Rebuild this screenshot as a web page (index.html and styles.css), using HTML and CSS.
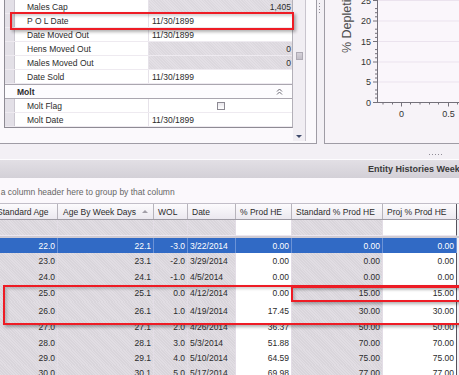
FILE: index.html
```html
<!DOCTYPE html>
<html lang="en">
<head>
    <meta charset="UTF-8">
    <meta name="viewport" content="width=device-width, initial-scale=1.0">
    <title>Entity Histories</title>
    <link rel="stylesheet" href="styles.css">
</head>
<body>
    <div class="screen">
        <div class="top">
            <div class="props-panel">
                <div class="prop-grid">
                    <div class="prop-rows">
                        <div class="prop-row">
                            <div class="prop-margin"></div>
                            <div class="prop-label">Males Cap</div>
                            <div class="prop-value readonly">1,405</div>
                        </div>
                        <div class="prop-row">
                            <div class="prop-margin"></div>
                            <div class="prop-label">P O L Date</div>
                            <div class="prop-value">11/30/1899</div>
                        </div>
                        <div class="prop-row">
                            <div class="prop-margin"></div>
                            <div class="prop-label">Date Moved Out</div>
                            <div class="prop-value">11/30/1899</div>
                        </div>
                        <div class="prop-row">
                            <div class="prop-margin"></div>
                            <div class="prop-label">Hens Moved Out</div>
                            <div class="prop-value readonly">0</div>
                        </div>
                        <div class="prop-row">
                            <div class="prop-margin"></div>
                            <div class="prop-label">Males Moved Out</div>
                            <div class="prop-value readonly">0</div>
                        </div>
                        <div class="prop-row">
                            <div class="prop-margin"></div>
                            <div class="prop-label">Date Sold</div>
                            <div class="prop-value">11/30/1899</div>
                        </div>
                        <div class="prop-category">
                            <span>Molt</span>
                            <svg class="collapse-icon" width="7" height="7" viewBox="0 0 7 7">
                                <polyline points="1,3.5 3.5,1 6,3.5" fill="none" stroke="#6d6a74" stroke-width="1"/>
                                <polyline points="1,6.5 3.5,4 6,6.5" fill="none" stroke="#6d6a74" stroke-width="1"/>
                            </svg>
                        </div>
                        <div class="prop-row">
                            <div class="prop-margin"></div>
                            <div class="prop-label">Molt Flag</div>
                            <div class="prop-value check-cell"><span class="checkbox"></span></div>
                        </div>
                        <div class="prop-row">
                            <div class="prop-margin"></div>
                            <div class="prop-label">Molt Date</div>
                            <div class="prop-value">11/30/1899</div>
                        </div>
                    </div>
                    <div class="vscroll">
                        <span class="vscroll-grip"></span>
                        <span class="vscroll-arrow"></span>
                    </div>
                </div>
            </div>
            <div class="vsplit"><span class="grip-v"></span></div>
            <div class="chart-panel">
                <svg width="134" height="143" viewBox="0 0 134 143">
                    <g transform="translate(-325,0)">
                        <rect x="377" y="-5" width="90" height="107" fill="#faf6fb"/>
                        <g stroke="#ebe3ee" stroke-width="1">
                            <line x1="377" y1="0.5" x2="460" y2="0.5"/>
                            <line x1="377" y1="21" x2="460" y2="21"/>
                            <line x1="377" y1="41.5" x2="460" y2="41.5"/>
                            <line x1="377" y1="62" x2="460" y2="62"/>
                            <line x1="377" y1="82" x2="460" y2="82"/>
                        </g>
                        <g stroke="#74717a" stroke-width="1">
                            <line x1="377.5" y1="0" x2="377.5" y2="102.5"/>
                            <line x1="377" y1="102.5" x2="460" y2="102.5"/>
                            <line x1="373" y1="0.5" x2="377" y2="0.5"/>
                            <line x1="373" y1="21" x2="377" y2="21"/>
                            <line x1="373" y1="41.5" x2="377" y2="41.5"/>
                            <line x1="373" y1="62" x2="377" y2="62"/>
                            <line x1="373" y1="82" x2="377" y2="82"/>
                            <line x1="373" y1="102.5" x2="377" y2="102.5"/>
                            <line x1="375" y1="8.6" x2="377" y2="8.6"/>
                            <line x1="375" y1="12.7" x2="377" y2="12.7"/>
                            <line x1="375" y1="16.8" x2="377" y2="16.8"/>
                            <line x1="375" y1="29.2" x2="377" y2="29.2"/>
                            <line x1="375" y1="33.3" x2="377" y2="33.3"/>
                            <line x1="375" y1="37.4" x2="377" y2="37.4"/>
                            <line x1="375" y1="49.6" x2="377" y2="49.6"/>
                            <line x1="375" y1="53.7" x2="377" y2="53.7"/>
                            <line x1="375" y1="57.8" x2="377" y2="57.8"/>
                            <line x1="375" y1="70" x2="377" y2="70"/>
                            <line x1="375" y1="74" x2="377" y2="74"/>
                            <line x1="375" y1="78" x2="377" y2="78"/>
                            <line x1="375" y1="90" x2="377" y2="90"/>
                            <line x1="375" y1="94" x2="377" y2="94"/>
                            <line x1="375" y1="98" x2="377" y2="98"/>
                            <line x1="383" y1="102" x2="383" y2="104.5"/>
                            <line x1="392.5" y1="102" x2="392.5" y2="104.5"/>
                            <line x1="401.5" y1="102" x2="401.5" y2="106.5"/>
                            <line x1="410.5" y1="102" x2="410.5" y2="104.5"/>
                            <line x1="420" y1="102" x2="420" y2="104.5"/>
                            <line x1="429.5" y1="102" x2="429.5" y2="104.5"/>
                            <line x1="438.5" y1="102" x2="438.5" y2="104.5"/>
                            <line x1="448.5" y1="102" x2="448.5" y2="106.5"/>
                            <line x1="457.5" y1="102" x2="457.5" y2="104.5"/>
                        </g>
                        <g class="tick-label" text-anchor="end">
                            <text x="371" y="3.5">25</text>
                            <text x="371" y="24">20</text>
                            <text x="371" y="44.5">15</text>
                            <text x="371" y="65">10</text>
                            <text x="371" y="85">5</text>
                            <text x="371" y="105.5">0</text>
                        </g>
                        <g class="tick-label" text-anchor="middle">
                            <text x="401.5" y="117">0</text>
                            <text x="448.5" y="117">0.5</text>
                        </g>
                        <text class="axis-title" transform="translate(351,53) rotate(-90)">% Depletion</text>
                    </g>
                </svg>
            </div>
        </div>

        <div class="hsplit"><span class="grip-h"></span></div>

        <div class="grid-panel">
            <div class="grid-title">Entity Histories Weekly</div>
            <div class="group-panel">Drag a column header here to group by that column</div>
            <div class="grid">
                <div class="grid-row header">
                    <div class="hcell">Standard Age</div>
                    <div class="hcell sorted">Age By Week Days<span class="sort-up"></span></div>
                    <div class="hcell">WOL</div>
                    <div class="hcell">Date</div>
                    <div class="hcell">% Prod HE</div>
                    <div class="hcell">Standard % Prod HE</div>
                    <div class="hcell last">Proj % Prod HE</div>
                </div>
                <div class="grid-row filter">
                    <div class="cell ro"></div>
                    <div class="cell ro"></div>
                    <div class="cell ro"></div>
                    <div class="cell ro"></div>
                    <div class="cell"></div>
                    <div class="cell ro"></div>
                    <div class="cell last"></div>
                </div>
                <div class="grid-row selected">
                    <div class="cell ro num">22.0</div>
                    <div class="cell ro num">22.1</div>
                    <div class="cell ro num">-3.0</div>
                    <div class="cell ro">3/22/2014</div>
                    <div class="cell num">0.00</div>
                    <div class="cell ro num">0.00</div>
                    <div class="cell num last">0.00</div>
                </div>
                <div class="grid-row">
                    <div class="cell ro num">23.0</div>
                    <div class="cell ro num">23.1</div>
                    <div class="cell ro num">-2.0</div>
                    <div class="cell ro">3/29/2014</div>
                    <div class="cell num">0.00</div>
                    <div class="cell ro num">0.00</div>
                    <div class="cell num last">0.00</div>
                </div>
                <div class="grid-row">
                    <div class="cell ro num">24.0</div>
                    <div class="cell ro num">24.1</div>
                    <div class="cell ro num">-1.0</div>
                    <div class="cell ro">4/5/2014</div>
                    <div class="cell num">0.00</div>
                    <div class="cell ro num">0.00</div>
                    <div class="cell num last">0.00</div>
                </div>
                <div class="grid-row tall">
                    <div class="cell ro num">25.0</div>
                    <div class="cell ro num">25.1</div>
                    <div class="cell ro num">0.0</div>
                    <div class="cell ro">4/12/2014</div>
                    <div class="cell num">0.00</div>
                    <div class="cell ro num">15.00</div>
                    <div class="cell num last">15.00</div>
                </div>
                <div class="grid-row tall">
                    <div class="cell ro num">26.0</div>
                    <div class="cell ro num">26.1</div>
                    <div class="cell ro num">1.0</div>
                    <div class="cell ro">4/19/2014</div>
                    <div class="cell num">17.45</div>
                    <div class="cell ro num">30.00</div>
                    <div class="cell num last">30.00</div>
                </div>
                <div class="grid-row">
                    <div class="cell ro num">27.0</div>
                    <div class="cell ro num">27.1</div>
                    <div class="cell ro num">2.0</div>
                    <div class="cell ro">4/26/2014</div>
                    <div class="cell num">36.37</div>
                    <div class="cell ro num">50.00</div>
                    <div class="cell num last">50.00</div>
                </div>
                <div class="grid-row">
                    <div class="cell ro num">28.0</div>
                    <div class="cell ro num">28.1</div>
                    <div class="cell ro num">3.0</div>
                    <div class="cell ro">5/3/2014</div>
                    <div class="cell num">51.88</div>
                    <div class="cell ro num">70.00</div>
                    <div class="cell num last">70.00</div>
                </div>
                <div class="grid-row">
                    <div class="cell ro num">29.0</div>
                    <div class="cell ro num">29.1</div>
                    <div class="cell ro num">4.0</div>
                    <div class="cell ro">5/10/2014</div>
                    <div class="cell num">64.59</div>
                    <div class="cell ro num">75.00</div>
                    <div class="cell num last">75.00</div>
                </div>
                <div class="grid-row">
                    <div class="cell ro num">30.0</div>
                    <div class="cell ro num">30.1</div>
                    <div class="cell ro num">5.0</div>
                    <div class="cell ro">5/17/2014</div>
                    <div class="cell num">69.98</div>
                    <div class="cell ro num">77.00</div>
                    <div class="cell num last">77.00</div>
                </div>
            </div>
        </div>

        <!-- annotation boxes drawn over the screenshot -->
        <div class="mark mark-pol"></div>
        <div class="mark mark-rows"></div>
        <div class="mark mark-std"></div>
    </div>
</body>
</html>
```

FILE: styles.css
```css
* {
    margin: 0;
    padding: 0;
    box-sizing: border-box;
}

body {
    width: 459px;
    height: 375px;
    overflow: hidden;
    background: #f3f0f5;
    font-family: 'Liberation Sans', Arial, sans-serif;
    font-size: 8.5px;
    color: #2b2b2b;
}

.screen {
    position: relative;
    width: 459px;
    height: 375px;
    overflow: hidden;
}

/* top area: property grid + chart */

.top {
    display: flex;
    height: 144px;
}

.props-panel {
    width: 317px;
    padding-left: 4px;
    background: #fbf9fc;
    border-right: 1px solid #9f9ca5;
    border-bottom: 1px solid #9f9ca5;
}

.prop-grid {
    display: flex;
    width: 302px;
    height: 141px;
}

.prop-rows {
    width: 289px;
    height: 128px;
    background: #fff;
    border-left: 1px solid #8e8b94;
    border-right: 1px solid #b3b0b8;
    border-bottom: 1px solid #8e8b94;
}

.prop-row {
    display: flex;
    height: 14px;
    line-height: 13px;
    border-bottom: 1px solid #eeeaf0;
}

.prop-margin {
    width: 10px;
    background: #e3e0e7;
    border-right: 1px solid #cbc7d0;
}

.prop-label {
    width: 134px;
    padding-left: 12px;
    padding-top: 1px;
    border-right: 1px solid #e6e2e9;
    white-space: nowrap;
}

.prop-value {
    flex: 1;
    padding-left: 3px;
    padding-top: 1px;
}

.prop-value.readonly {
    text-align: right;
    padding-right: 1px;
    background: repeating-linear-gradient(45deg, #dcd8de 0 1px, #e3dfe5 1px 2px);
}

.check-cell {
    display: flex;
    align-items: center;
    padding-left: 68px;
}

.checkbox {
    width: 8px;
    height: 8px;
    border: 1px solid #8d8a93;
    background: linear-gradient(#e9e7ec, #ffffff);
}

.prop-category {
    display: flex;
    justify-content: space-between;
    align-items: center;
    height: 15px;
    padding-left: 12px;
    padding-right: 9px;
    font-weight: bold;
    border-top: 1px solid #aaa6af;
    border-bottom: 1px solid #aaa6af;
    background: #fdfcfe;
}

.vscroll {
    display: flex;
    flex-direction: column;
    align-items: center;
    justify-content: space-between;
    width: 13px;
    height: 141px;
    padding: 52px 0 3px;
    background: #f1eef3;
    border-right: 1px solid #c9c5ce;
}

.vscroll-grip {
    width: 7px;
    height: 8px;
    background: linear-gradient(#d5d1d9, #c2bec7);
    border: 1px solid #aeaab4;
}

.vscroll-arrow {
    width: 0;
    height: 0;
    border-left: 3px solid transparent;
    border-right: 3px solid transparent;
    border-top: 3px solid #3f4a6b;
}

.vsplit {
    width: 7px;
    padding: 3px 0 0 2px;
}

.grip-v {
    display: block;
    width: 1px;
    height: 12px;
    background: repeating-linear-gradient(#8f8c96 0 1px, transparent 1px 3px);
}

.chart-panel {
    flex: 1;
    background: #f7f3f8;
    border-left: 1px solid #9f9ca5;
    border-bottom: 1px solid #9f9ca5;
    overflow: hidden;
}

.chart-panel svg {
    display: block;
}

.tick-label {
    font-family: 'Liberation Sans', Arial, sans-serif;
    font-size: 9px;
    fill: #333;
}

.axis-title {
    font-family: 'Liberation Sans', Arial, sans-serif;
    font-size: 12.5px;
    fill: #4e4e4e;
}

/* splitter between top and grid */

.hsplit {
    display: flex;
    justify-content: flex-end;
    align-items: flex-end;
    height: 15px;
    padding: 0 16px 4px 0;
}

.grip-h {
    width: 14px;
    height: 1px;
    background: repeating-linear-gradient(90deg, #8f8c96 0 1px, transparent 1px 3px);
}

/* grid */

.grid-title {
    height: 19px;
    line-height: 18px;
    padding-left: 368px;
    font-size: 9px;
    font-weight: bold;
    color: #3a3a3a;
    white-space: nowrap;
    overflow: hidden;
    border-top: 1px solid #fdfcfe;
    background: linear-gradient(#e2dfe5, #d3d0d7);
}

.group-panel {
    height: 25px;
    padding-top: 8px;
    line-height: 12px;
    text-indent: -20px;
    color: #666;
    white-space: nowrap;
    overflow: hidden;
    background: #fbf8fc;
}

.grid {
    margin-left: -7px;
    width: 475px;
}

.grid-row {
    display: grid;
    grid-template-columns: 65px 96px 34px 48px 56px 91px 74px;
    height: 15.4px;
    line-height: 15px;
}

.grid-row.tall {
    height: 17.5px;
    line-height: 17px;
}

.grid-row.header {
    height: 17px;
    line-height: 16px;
    border-top: 1px solid #c2bec8;
    border-bottom: 1px solid #9e9ba4;
    background: linear-gradient(#fcfbfd, #ebe8ef);
}

.hcell {
    padding-left: 4px;
    border-right: 1px solid #b7b4bc;
    white-space: nowrap;
    overflow: hidden;
}

.hcell.sorted {
    display: flex;
    justify-content: space-between;
    align-items: center;
    padding-left: 5px;
    padding-right: 5px;
}

.sort-up {
    width: 0;
    height: 0;
    border-left: 3px solid transparent;
    border-right: 3px solid transparent;
    border-bottom: 3px solid #a19ea7;
}

.hcell.last,
.cell.last {
    border-right: 1px solid #55525c;
}

.grid-row.filter {
    height: 18px;
    border-bottom: 2px solid #cfcbd3;
}

.cell {
    padding: 1px 2px 0;
    background: #fff;
    border-right: 1px solid #e3dde6;
    border-bottom: 1px solid #ede7f0;
    white-space: nowrap;
}

.cell.ro {
    background: repeating-linear-gradient(45deg, #d9d5db 0 1px, #e1dde3 1px 2px);
}

.cell.num {
    text-align: right;
}

.grid-row.selected .cell {
    background: #316ac5;
    color: #fff;
    border-right-color: #6c93d6;
    border-bottom-color: #316ac5;
}

/* red annotation boxes */

.mark {
    position: absolute;
    border: 2px solid #ee1c25;
    box-shadow: 2px 2px 3px rgba(0, 0, 0, 0.3), inset 2px 2px 3px rgba(0, 0, 0, 0.18);
}

.mark-pol {
    left: 10px;
    top: 12px;
    width: 284px;
    height: 18px;
}

.mark-rows {
    left: 3px;
    top: 285px;
    width: 470px;
    height: 40px;
}

.mark-std {
    left: 291px;
    top: 286px;
    width: 175px;
    height: 16px;
}
```
